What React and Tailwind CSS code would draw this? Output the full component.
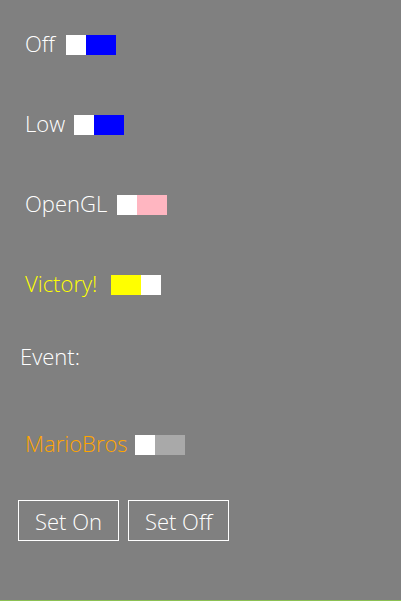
import React from 'react'

const FONT = { fontFamily: '"Open Sans", "Liberation Sans", sans-serif' }

const Switch = ({ left, right }) => (
  <div className="flex h-[20px] w-[50px] shrink-0">
    <div className={left} />
    <div className={right} />
  </div>
)

const Row = ({ label, textColor, gap = 'gap-[11px]', children }) => (
  <div className={`flex items-center h-[20px] pl-[25px] ${gap}`}>
    <span className={`text-[22px] font-light leading-none pb-[4px] ${textColor}`}>{label}</span>
    {children}
  </div>
)

export default function App() {
  return (
    <div className="w-[401px] h-[601px] bg-[#808080] flex flex-col border-b border-[#8cc152] text-white" style={FONT}>
      <div className="flex flex-col gap-[60px] pt-[35px]">
        <Row label="Off" textColor="text-white">
          <Switch left="w-[20px] bg-white" right="w-[30px] bg-[#0000ff]" />
        </Row>
        <Row label="Low" textColor="text-white" gap="gap-[9px]">
          <Switch left="w-[20px] bg-white" right="w-[30px] bg-[#0000ff]" />
        </Row>
        <Row label="OpenGL" textColor="text-white" gap="gap-[10px]">
          <Switch left="w-[20px] bg-white" right="w-[30px] bg-[#ffb6c1]" />
        </Row>
        <Row label="Victory!" textColor="text-[#ffff00]" gap="gap-[14px]">
          <Switch left="w-[30px] bg-[#ffff00]" right="w-[20px] bg-white" />
        </Row>
      </div>
      <div className="mt-[53px] h-[20px] pl-[20px] flex items-center">
        <span className="text-[22px] font-light leading-none pb-[4px]">Event:</span>
      </div>
      <div className="mt-[67px]">
        <Row label="MarioBros" textColor="text-[#ffa500]" gap="gap-[7px]">
          <Switch left="w-[20px] bg-white" right="w-[30px] bg-[#a9a9a9]" />
        </Row>
      </div>
      <div className="mt-[45px] flex gap-[9px] pl-[18px]">
        <button className="w-[101px] h-[41px] border border-white text-[22px] font-light leading-none">Set On</button>
        <button className="w-[101px] h-[41px] border border-white text-[22px] font-light leading-none">Set Off</button>
      </div>
    </div>
  )
}
